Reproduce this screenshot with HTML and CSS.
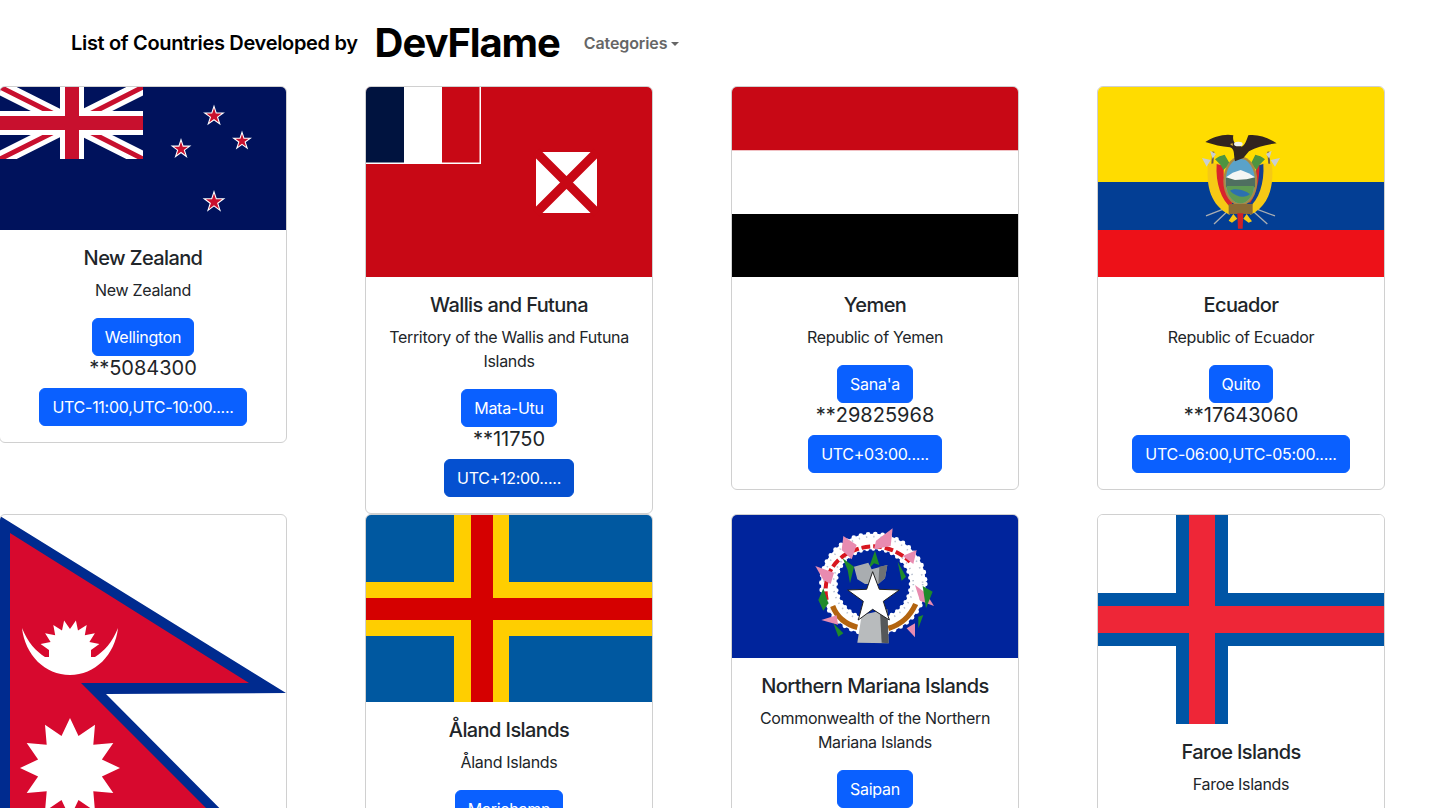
FILE: index.html
```html
<!DOCTYPE html>
<html lang="en">
<head>
  <meta charset="UTF-8">
  <meta name="viewport" content="width=device-width, initial-scale=1.0">
  <title>List of Countries</title>
  <link rel="stylesheet" href="styles.css">
</head>
<body>
  <nav class="navbar">
    <span class="nav-title">List of Countries Developed by</span>
    <span class="nav-brand">DevFlame</span>
    <span class="nav-link">Categories<i class="caret"></i></span>
  </nav>

  <div class="country-grid">

    <!-- New Zealand -->
    <div class="card">
      <svg class="flag" viewBox="0 0 286 143">
        <defs>
          <polygon id="nz-star" points="0,-1 .225,-.309 .951,-.309 .363,.118 .588,.809 0,.382 -.588,.809 -.363,.118 -.951,-.309 -.225,-.309"/>
        </defs>
        <rect width="286" height="143" fill="#00125c"/>
        <svg width="143" height="72" viewBox="0 0 143 72">
          <path d="M0 0L143 72M143 0L0 72" stroke="#fff" stroke-width="15"/>
          <path d="M-4 -2L64 32M147 -2L80 32M-4 74L64 40M147 74L80 40" stroke="#c8102e" stroke-width="5"/>
          <path d="M72 0V72M0 36H143" stroke="#fff" stroke-width="24"/>
          <path d="M72 0V72M0 36H143" stroke="#c8102e" stroke-width="14"/>
        </svg>
        <use href="#nz-star" transform="translate(214 29) scale(11.5)" fill="#fff"/>
        <use href="#nz-star" transform="translate(214 29) scale(8)" fill="#c8102e"/>
        <use href="#nz-star" transform="translate(242 54) scale(10.5)" fill="#fff"/>
        <use href="#nz-star" transform="translate(242 54) scale(7)" fill="#c8102e"/>
        <use href="#nz-star" transform="translate(181 62) scale(11)" fill="#fff"/>
        <use href="#nz-star" transform="translate(181 62) scale(7.5)" fill="#c8102e"/>
        <use href="#nz-star" transform="translate(214 115) scale(12)" fill="#fff"/>
        <use href="#nz-star" transform="translate(214 115) scale(8.5)" fill="#c8102e"/>
      </svg>
      <div class="card-body">
        <h5 class="card-title">New Zealand</h5>
        <p class="card-text">New Zealand</p>
        <a class="btn">Wellington</a>
        <h5 class="population">**5084300</h5>
        <a class="btn">UTC-11:00,UTC-10:00.....</a>
      </div>
    </div>

    <!-- Wallis and Futuna -->
    <div class="card">
      <svg class="flag" viewBox="0 0 286 190">
        <rect width="286" height="190" fill="#c80815"/>
        <rect width="115" height="77" fill="#fff"/>
        <rect width="38" height="75.5" fill="#00133f"/>
        <rect x="76" width="37.5" height="75.5" fill="#c80815"/>
        <rect x="170" y="65" width="61" height="61" fill="#fff"/>
        <path d="M170 65L231 126M231 65L170 126" stroke="#c80815" stroke-width="9"/>
      </svg>
      <div class="card-body">
        <h5 class="card-title">Wallis and Futuna</h5>
        <p class="card-text">Territory of the Wallis and Futuna Islands</p>
        <a class="btn">Mata-Utu</a>
        <h5 class="population">**11750</h5>
        <a class="btn btn-hover">UTC+12:00.....</a>
      </div>
    </div>

    <!-- Yemen -->
    <div class="card">
      <svg class="flag" viewBox="0 0 286 190">
        <rect width="286" height="63.5" fill="#c80815"/>
        <rect y="63.5" width="286" height="63.5" fill="#fff"/>
        <rect y="127" width="286" height="63" fill="#000"/>
      </svg>
      <div class="card-body">
        <h5 class="card-title">Yemen</h5>
        <p class="card-text">Republic of Yemen</p>
        <a class="btn">Sana'a</a>
        <h5 class="population">**29825968</h5>
        <a class="btn">UTC+03:00.....</a>
      </div>
    </div>

    <!-- Ecuador -->
    <div class="card">
      <svg class="flag" viewBox="0 0 286 190">
        <rect width="286" height="95" fill="#ffdc00"/>
        <rect y="95" width="286" height="48" fill="#033e94"/>
        <rect y="143" width="286" height="47" fill="#ed1118"/>
        <!-- coat of arms -->
        <g transform="translate(82 33) scale(.3333)">
          <path d="M100 95L92 190M265 95L272 190" stroke="#6d5a4a" stroke-width="6" fill="none"/>
          <path d="M90 92L108 102L98 116Z M66 114L92 120L80 140Z M275 92L258 102L268 116Z M300 114L272 120L285 140Z" fill="#c9ced2"/>
          <path d="M128 268L78 288M140 276L102 312M232 268L285 288M222 276L262 312" stroke="#a9adb2" stroke-width="4"/>
          <path d="M84 132C78 200 92 255 148 284L166 262C134 240 122 190 122 128Z" fill="#f6c915"/>
          <path d="M276 132C282 200 268 255 212 284L194 262C226 240 238 190 238 128Z" fill="#f6c915"/>
          <path d="M110 132C106 190 124 240 154 264L158 240C136 212 128 175 132 138Z" fill="#d9232c"/>
          <path d="M250 132C254 190 236 240 206 264L202 240C224 212 232 175 228 138Z" fill="#123f92"/>
          <path d="M238 130C240 180 228 225 210 250L203 240C222 212 232 175 228 138Z" fill="#d9232c"/>
          <path d="M105 118C112 110 125 106 134 104L150 132L130 150L122 135Z" fill="#4e9440"/>
          <path d="M255 118C248 110 235 106 226 104L212 132L230 150L238 135Z" fill="#4e9440"/>
          <ellipse cx="181" cy="183" rx="51" ry="74" fill="#a78a45"/>
          <ellipse cx="181" cy="183" rx="44" ry="67" fill="#5aa2c9"/>
          <path d="M138 172L158 158L182 150L206 160L225 172V192H138Z" fill="#f4f6f4"/>
          <path d="M138 172L165 180L200 178L225 172L225 202H138Z" fill="#4f6f60"/>
          <path d="M140 198H222C222 225 202 250 181 250C160 250 140 225 140 198Z" fill="#5e9a52"/>
          <path d="M150 212C170 200 200 215 210 222C195 236 170 232 150 212Z" fill="#2c70b0"/>
          <rect x="146" y="252" width="72" height="30" fill="#8b6a35"/>
          <path d="M172 280H190L188 326H174Z" fill="#d02027"/>
          <path d="M146 302L160 282L172 296L156 308Z M216 304L200 282L190 296L206 308Z" fill="#f6c915"/>
          <path d="M76 66C100 50 135 40 160 46C158 56 160 64 165 70L185 80C195 76 200 60 205 46C235 42 265 54 290 70C260 74 230 80 207 94L190 114L165 124C160 100 165 88 150 82C125 80 100 74 76 66Z" fill="#32241f"/>
          <ellipse cx="175" cy="72" rx="13" ry="7" fill="#f1f1ea"/>
          <path d="M158 70L150 72L158 78Z" fill="#e2b33a"/>
        </g>
      </svg>
      <div class="card-body">
        <h5 class="card-title">Ecuador</h5>
        <p class="card-text">Republic of Ecuador</p>
        <a class="btn">Quito</a>
        <h5 class="population">**17643060</h5>
        <a class="btn">UTC-06:00,UTC-05:00.....</a>
      </div>
    </div>

    <!-- Nepal -->
    <div class="card">
      <svg class="flag" viewBox="0 0 286 349">
        <polygon points="0,1 286,178 106,179 275,349 0,349" fill="#002b8f"/>
        <polygon points="10,18 249,168 81,168 262,349 10,349" fill="#d7092e"/>
        <path d="M22 113C25 140 45 160 70 160C95 160 115 140 118 113C112 128 104 136 95 142H45C36 136 28 128 22 113Z" fill="#fff"/>
        <polygon points="49,135 40.6,129.1 50.6,127 45.1,118.3 55.2,120.2 53.3,110.1 62,115.6 64.1,105.6 70,114 75.9,105.6 78,115.6 86.7,110.1 84.8,120.2 94.9,118.3 89.4,127 99.4,129.1 91,135 91,145 49,145" fill="#fff"/>
        <polygon points="70,203 78.5,221.1 95,209.7 93.3,229.7 113.3,228 101.9,244.5 120,253 101.9,261.5 113.3,278 93.3,276.3 95,296.3 78.5,284.9 70,303 61.5,284.9 45,296.3 46.7,276.3 26.7,278 38.1,261.5 20,253 38.1,244.5 26.7,228 46.7,229.7 45,209.7 61.5,221.1" fill="#fff"/>
      </svg>
    </div>

    <!-- Aland Islands -->
    <div class="card">
      <svg class="flag" viewBox="0 0 286 187">
        <rect width="286" height="187" fill="#0058a0"/>
        <rect x="88" width="55" height="187" fill="#ffce00"/>
        <rect y="67" width="286" height="54" fill="#ffce00"/>
        <rect x="105" width="22" height="187" fill="#d50000"/>
        <rect y="83" width="286" height="22" fill="#d50000"/>
      </svg>
      <div class="card-body">
        <h5 class="card-title">Åland Islands</h5>
        <p class="card-text">Åland Islands</p>
        <a class="btn">Mariehamn</a>
      </div>
    </div>

    <!-- Northern Mariana Islands -->
    <div class="card">
      <svg class="flag" viewBox="0 0 286 143">
        <rect width="286" height="143" fill="#00249c"/>
        <!-- seal -->
        <g transform="translate(68 5) scale(.3333)">
          <ellipse cx="220" cy="192" rx="134" ry="128" fill="none" stroke="#fff" stroke-width="46"/>
          <ellipse cx="220" cy="192" rx="156" ry="150" fill="none" stroke="#fff" stroke-width="14" stroke-linecap="round" stroke-dasharray="0 22"/>
          <ellipse cx="220" cy="192" rx="112" ry="106" fill="none" stroke="#fff" stroke-width="12" stroke-linecap="round" stroke-dasharray="0 19"/>
          <ellipse cx="220" cy="192" rx="148" ry="142" fill="none" stroke="#b9c1d0" stroke-width="5" stroke-dasharray="4 18"/>
          <ellipse cx="220" cy="192" rx="120" ry="114" fill="none" stroke="#b9c1d0" stroke-width="5" stroke-dasharray="4 15"/>
          <path d="M80 240C66 175 100 115 160 92C205 72 270 70 330 125" fill="none" stroke="#d8161f" stroke-width="12" stroke-dasharray="26 9"/>
          <path d="M98 258C110 290 135 312 172 322M265 325C300 315 330 290 347 252" fill="none" stroke="#b3640f" stroke-width="16"/>
          <g fill="#e88bb0">
            <path d="M130 48L170 75L155 118L125 90Z"/>
            <path d="M278 25L272 78L222 88L228 62Z"/>
            <path d="M350 90L340 132L308 108Z"/>
            <path d="M46 138L102 158L92 192L70 180Z"/>
            <path d="M345 195L378 220L402 258L360 242Z"/>
            <path d="M64 300L110 286L114 314Z"/>
            <path d="M345 352L320 325L345 310Z"/>
          </g>
          <g fill="#1e8a2a">
            <path d="M128 115L162 140L150 190L143 150Z"/>
            <path d="M225 92L238 135L222 130L205 148Z"/>
            <path d="M293 125L318 170L305 182Z"/>
            <path d="M70 205L85 250L70 272L55 240Z"/>
            <path d="M368 198L398 215L378 265Z"/>
            <path d="M100 310L130 340L115 350Z"/>
            <path d="M355 290L370 285L355 325Z"/>
          </g>
          <path d="M162 140L205 128L215 148L262 135L255 175L235 192H195L172 178Z" fill="#a9adb0"/>
          <path d="M238 140L262 135L255 175L235 192Z" fill="#6f7275"/>
          <path d="M185 285L262 268L266 370L172 368Z" fill="#b8bbbd"/>
          <path d="M240 275L262 268L266 370L245 368Z" fill="#55585a"/>
          <polygon points="218,155 238,208 298,210 250,244 268,300 218,268 175,300 190,244 143,210 200,208" fill="#fff" stroke="#222" stroke-width="3"/>
        </g>
      </svg>
      <div class="card-body">
        <h5 class="card-title">Northern Mariana Islands</h5>
        <p class="card-text">Commonwealth of the Northern Mariana Islands</p>
        <a class="btn">Saipan</a>
      </div>
    </div>

    <!-- Faroe Islands -->
    <div class="card">
      <svg class="flag" viewBox="0 0 286 209">
        <rect width="286" height="209" fill="#fff"/>
        <rect x="78" width="52" height="209" fill="#0055a5"/>
        <rect y="78" width="286" height="53" fill="#0055a5"/>
        <rect x="91" width="26" height="209" fill="#ee2637"/>
        <rect y="91" width="286" height="27" fill="#ee2637"/>
      </svg>
      <div class="card-body">
        <h5 class="card-title">Faroe Islands</h5>
        <p class="card-text">Faroe Islands</p>
      </div>
    </div>

  </div>
</body>
</html>
```

FILE: styles.css
```css
html, body {
  height: 100%;
  overflow: hidden;
}
body {
  margin: 0;
  font-family: Inter, "Liberation Sans", sans-serif;
  font-size: 16px;
  line-height: 1.5;
  color: #212529;
  background-color: #fff;
}
.navbar {
  display: flex;
  align-items: center;
  height: 86px;
  padding-left: 71px;
}
.nav-title {
  font-size: 20px;
  font-weight: 600;
  letter-spacing: -.33px;
  color: #000;
}
.nav-brand {
  margin-left: 17px;
  font-size: 40px;
  font-weight: 700;
  letter-spacing: -1.1px;
  color: #000;
}
.nav-link {
  margin-left: 24px;
  font-weight: 600;
  letter-spacing: -.1px;
  color: #666;
}
.caret {
  display: inline-block;
  margin-left: 4px;
  vertical-align: 3px;
  border-top: 4px solid;
  border-left: 4px solid transparent;
  border-right: 4px solid transparent;
}
.country-grid {
  display: grid;
  grid-template-columns: repeat(4, 288px);
  column-gap: 78px;
  align-items: start;
  margin-left: -1px;
}
.card {
  border: 1px solid #d0d0d0;
  border-radius: 6px;
  overflow: hidden;
  background-color: #fff;
}
.flag {
  display: block;
  width: 100%;
}
.card-body {
  padding: 16px;
  text-align: center;
}
.card-title {
  margin: 0 0 8px;
  font-size: 20px;
  font-weight: 500;
  line-height: 1.2;
  letter-spacing: -.6px;
}
.card-text {
  margin: 0 0 16px;
  letter-spacing: -.32px;
}
.btn {
  display: inline-block;
  padding: 6px 12px;
  border: 1px solid #0a60ff;
  border-radius: 6px;
  background-color: #0a60ff;
  color: #fff;
  letter-spacing: -.27px;
}
.btn-hover {
  border-color: #0550d0;
  background-color: #0550d0;
}
.population {
  margin: 0 0 8px;
  font-size: 20px;
  font-weight: 400;
  line-height: 1.2;
}
```
